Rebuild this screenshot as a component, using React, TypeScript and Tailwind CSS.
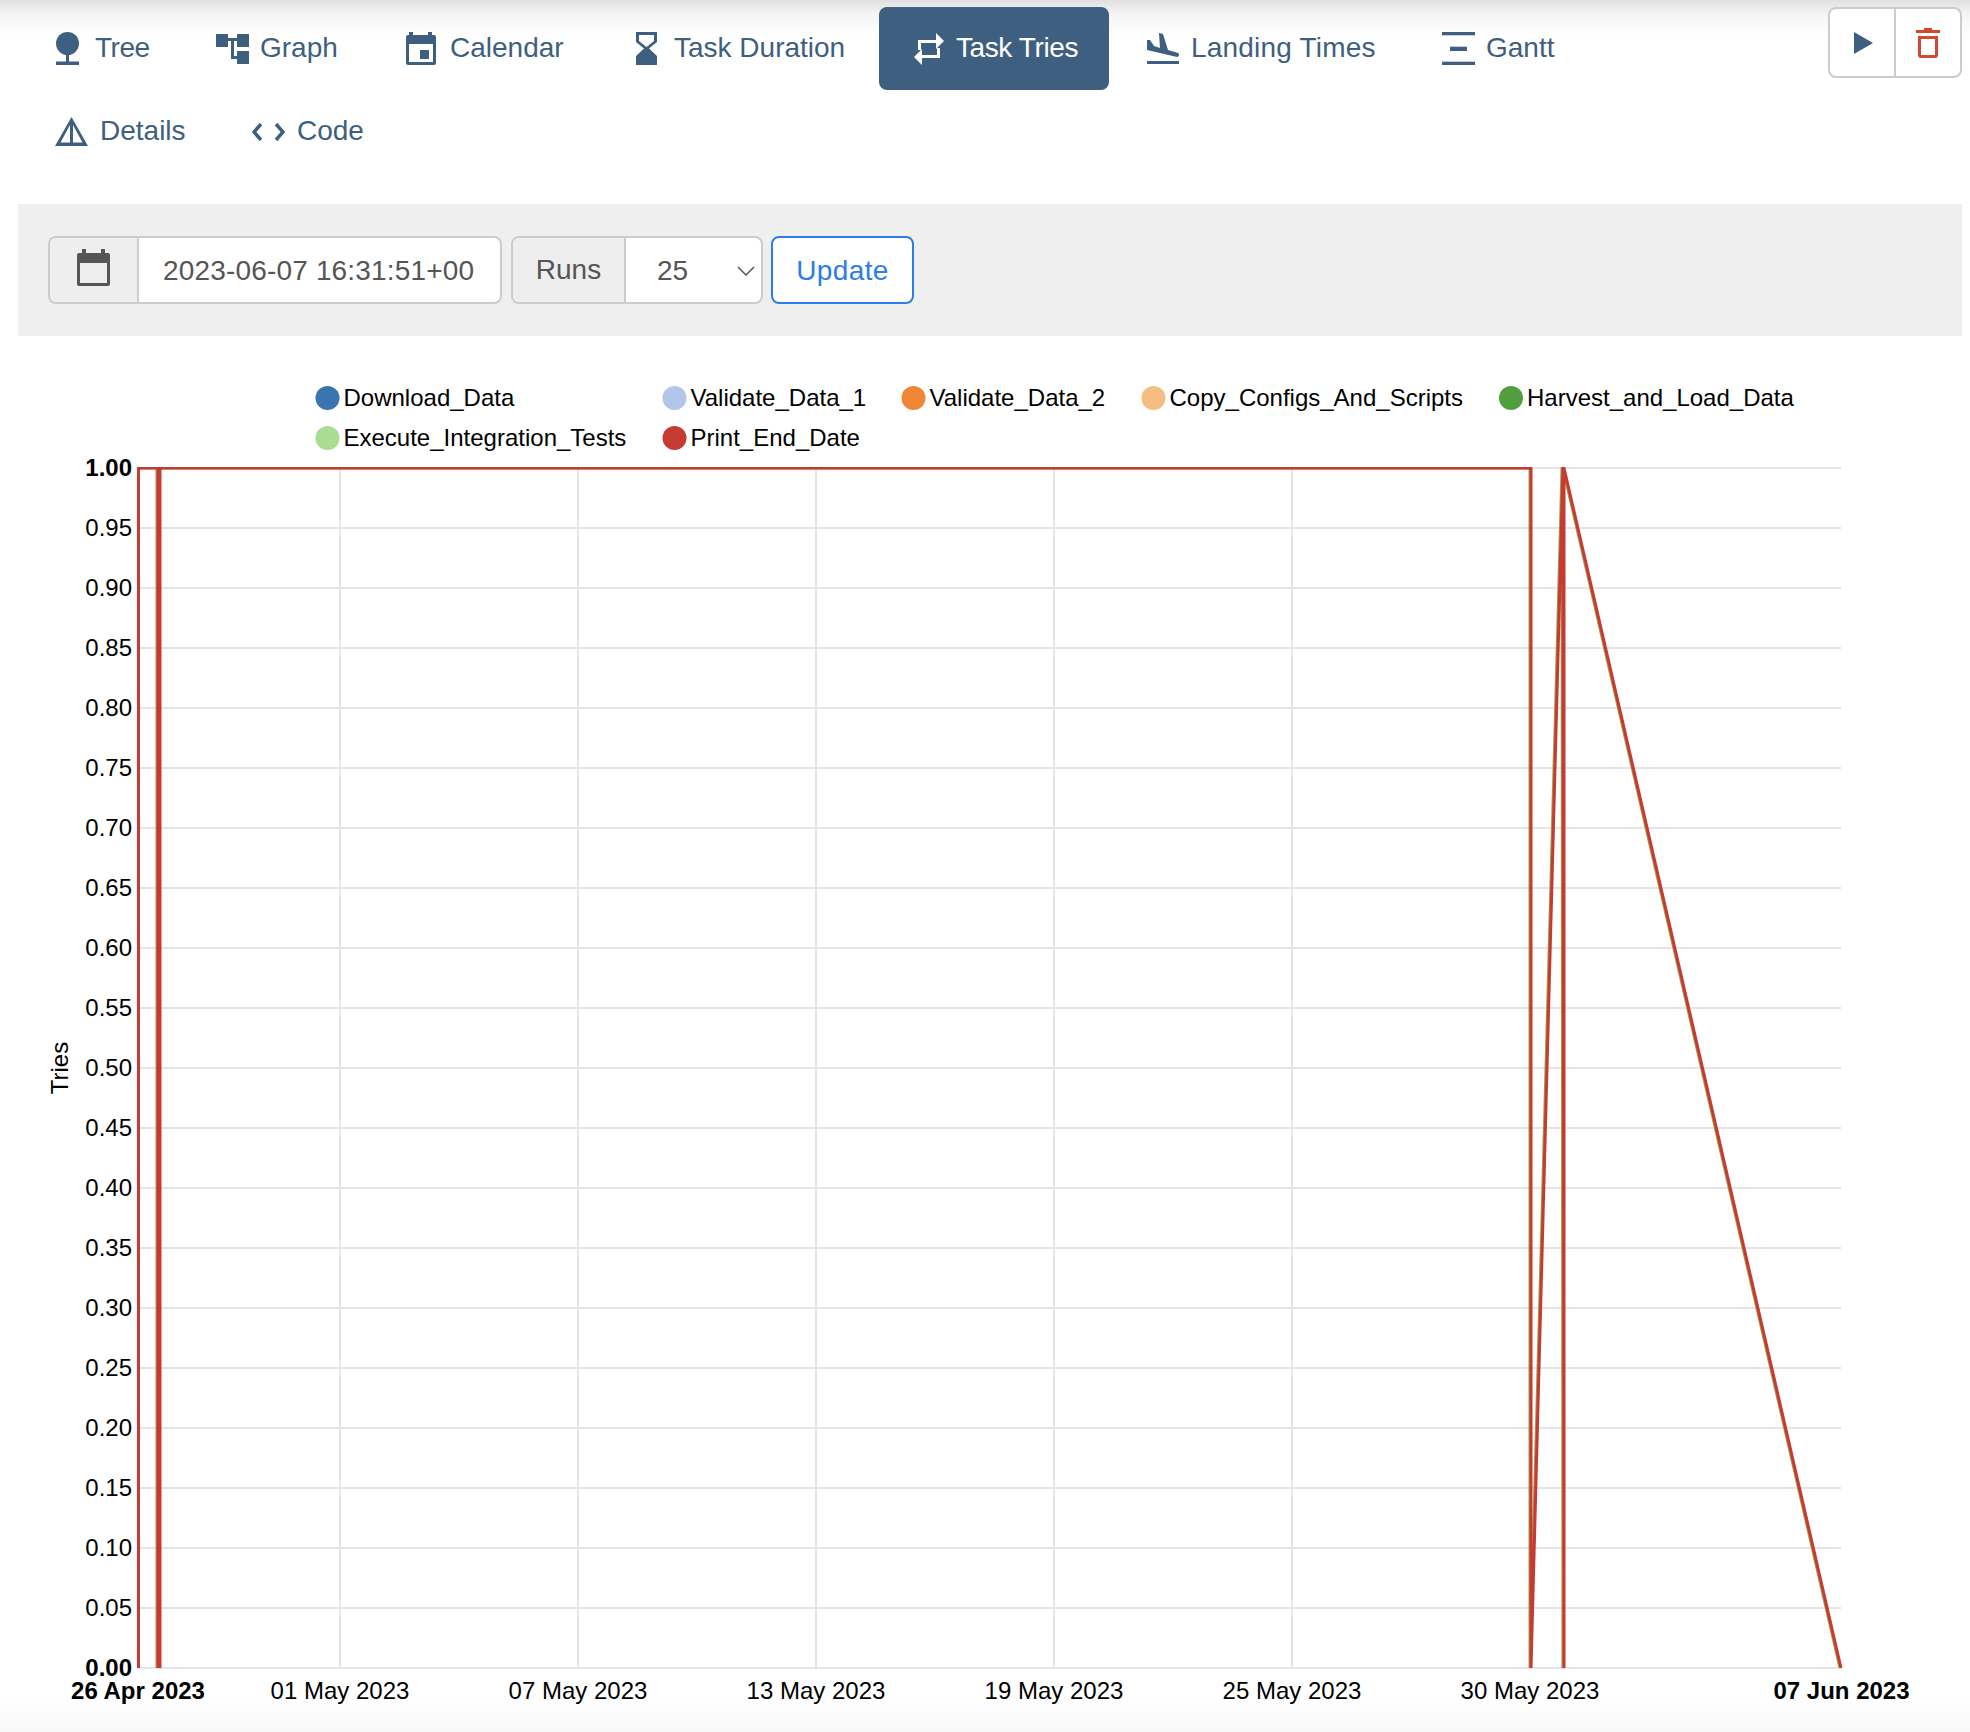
import React from "react";

const Tree = () => (
  <svg width="23" height="33" viewBox="0 0 23 33" fill="currentColor">
    <ellipse cx="11.5" cy="11.5" rx="11.5" ry="11.5" />
    <rect x="10" y="20" width="3" height="10" />
    <rect x="0" y="29.5" width="23" height="3.5" />
  </svg>
);

const GraphIcon = () => (
  <svg width="33" height="30" viewBox="0 0 33 30" fill="currentColor">
    <rect x="0" y="0" width="12" height="13" />
    <rect x="21" y="0" width="12" height="13" />
    <rect x="21" y="17" width="12" height="13" />
    <path d="M12 4h9v3h-3v15h3v3h-6V7h-3z" />
  </svg>
);

const CalendarIcon = () => (
  <svg width="30" height="33" viewBox="0 0 30 33" fill="currentColor">
    <path
      fillRule="evenodd"
      d="M3 0h4v3h15V0h4v3h2a2 2 0 0 1 2 2v26a2 2 0 0 1-2 2H2a2 2 0 0 1-2-2V5a2 2 0 0 1 2-2h1zM3 12v18h24V12z"
    />
    <rect x="14" y="18" width="9" height="9" />
  </svg>
);

const Hourglass = () => (
  <svg width="21" height="33" viewBox="0 0 21 33" fill="currentColor">
    <path
      fillRule="evenodd"
      d="M0 0h21v10l-8 6.5 8 7.5v9H0v-9l8-7.5L0 10zM3 3v6l7.5 6L18 9V3z"
    />
  </svg>
);

const Retweet = () => (
  <svg width="30" height="32" viewBox="0 0 30 32" fill="currentColor">
    <path d="M22 0l8 8-8 8v-6H7v7H4V7h18z" />
    <path d="M8 16v6h15v-7h3v10H8v7l-8-8z" />
  </svg>
);

const Landing = () => (
  <svg width="32" height="31" viewBox="0 0 32 31" fill="currentColor">
    <path d="M0 7h3l4 6 6 2-1-15 4 1 5 16 10 3c2 1 1 4-1 4L0 17z" />
    <rect x="0" y="28" width="32" height="3" />
  </svg>
);

const GanttIcon = () => (
  <svg width="33" height="33" viewBox="0 0 33 33" fill="currentColor">
    <rect x="0" y="0" width="33" height="3.3" />
    <rect x="8" y="14.7" width="17" height="4.3" />
    <rect x="0" y="29.7" width="33" height="3.3" />
  </svg>
);

const DetailsIcon = () => (
  <svg width="33" height="29" viewBox="0 0 33 29" fill="currentColor">
    <path
      fillRule="evenodd"
      d="M16.5 0L33 29H0zM15 8L5.5 25.5H15zM18 8v17.500h9.500z"
    />
  </svg>
);

const CodeIcon = () => (
  <svg width="33" height="18" viewBox="0 0 33 18" fill="none" stroke="currentColor" strokeWidth="3.5">
    <path d="M9 1L2 9l7 8" />
    <path d="M24 1l7 8-7 8" />
  </svg>
);

const tabs = [
  { name: "Tree", icon: <Tree />, width: "w-[157px]", box: "w-[44px] pl-[5px]", text: "tracking-[-0.5px]" },
  { name: "Graph", icon: <GraphIcon />, width: "w-[183px]", box: "w-[47px] pl-[3px]", text: "" },
  { name: "Calendar", icon: <CalendarIcon />, width: "w-[220px]", box: "w-[49px] pl-[5px]", text: "" },
  { name: "Task Duration", icon: <Hourglass />, width: "w-[278px]", box: "w-[48px] pl-[10px]", text: "" },
  { name: "Task Tries", icon: <Retweet />, width: "w-[230px]", box: "w-[47px] pl-[5px]", text: "tracking-[-0.4px]", active: true },
  { name: "Landing Times", icon: <Landing />, width: "w-[290px]", box: "w-[47px] pl-[3px]", text: "tracking-[0.2px]" },
  { name: "Gantt", icon: <GanttIcon />, width: "w-[176px]", box: "w-[47px] pl-[3px]", text: "" },
  { name: "Details", icon: <DetailsIcon />, width: "w-[194px]", box: "w-[49px] pl-[4px]", text: "" },
  { name: "Code", icon: <CodeIcon />, width: "w-[174px]", box: "w-[47px] pl-[2px]", text: "" },
];

const legend = [
  { name: "Download_Data", cx: 327.5, y: 398, color: "#3b75af" },
  { name: "Validate_Data_1", cx: 674.5, y: 398, color: "#b1c6e8" },
  { name: "Validate_Data_2", cx: 913.5, y: 398, color: "#ef8636" },
  { name: "Copy_Configs_And_Scripts", cx: 1153.5, y: 398, color: "#f5bd82" },
  { name: "Harvest_and_Load_Data", cx: 1511, y: 398, color: "#519e3e" },
  { name: "Execute_Integration_Tests", cx: 327.5, y: 438, color: "#a8dd93" },
  { name: "Print_End_Date", cx: 674.5, y: 438, color: "#c53a32" },
];

const xTicks = [
  { label: "26 Apr 2023", x: 138, bold: true },
  { label: "01 May 2023", x: 340 },
  { label: "07 May 2023", x: 578 },
  { label: "13 May 2023", x: 816 },
  { label: "19 May 2023", x: 1054 },
  { label: "25 May 2023", x: 1292 },
  { label: "30 May 2023", x: 1530 },
  { label: "07 Jun 2023", x: 1841.5, bold: true },
];

const yTicks = Array.from({ length: 21 }, (_, i) => i);

const triesLine =
  "M138.500 1668V468H158V1668H160V468H1531V1668L1563 468L1564 1668V468L1841 1668";

const Chart = () => (
  <svg width="1970" height="1396" viewBox="0 336 1970 1396" className="block text-[24px]">
    <defs>
      <clipPath id="plot">
        <rect x="137" y="467" width="1706" height="1201" />
      </clipPath>
    </defs>
    {yTicks.map((i) => (
      <line key={i} x1="138" x2="1841" y1={1668 - i * 60} y2={1668 - i * 60} stroke="#e5e5e5" strokeWidth="2" />
    ))}
    {xTicks.slice(1, 6).map((t) => (
      <line key={t.label} x1={t.x} x2={t.x} y1="468" y2="1668" stroke="#e5e5e5" strokeWidth="2" />
    ))}
    <g clipPath="url(#plot)">
      <path d={triesLine} transform="translate(-1 0)" fill="none" stroke="#a39c4a" strokeWidth="3" strokeLinejoin="round" />
      <path d={triesLine} fill="none" stroke="#c53a32" strokeWidth="3" strokeLinejoin="round" />
    </g>

    {yTicks.map((i) => (
      <text
        key={i}
        x="132"
        y={1668 - i * 60 + 8}
        textAnchor="end"
        fontWeight={i === 0 || i === 20 ? 700 : 400}
      >
        {(i * 0.05).toFixed(2)}
      </text>
    ))}
    {xTicks.map((t) => (
      <text key={t.label} x={t.x} y="1699" textAnchor="middle" fontWeight={t.bold ? 700 : 400}>
        {t.label}
      </text>
    ))}
    <text transform="translate(68 1068) rotate(-90)" textAnchor="middle">
      Tries
    </text>

    {legend.map((l) => (
      <g key={l.name}>
        <circle cx={l.cx} cy={l.y} r="12" fill={l.color} />
        <text x={l.cx + 16} y={l.y + 8}>
          {l.name}
        </text>
      </g>
    ))}
  </svg>
);

const App = () => {
  return (
    <div className="w-[1970px] h-[1732px] overflow-hidden bg-white flex flex-col text-[28px] [font-family:'Liberation_Sans',Arial,sans-serif]">
      <div className="flex justify-between items-start h-[204px] pt-[7px] pl-[21px] pr-[8px] bg-[linear-gradient(to_bottom,#e0e0e0_0,#f4f4f4_14px,#ffffff_36px)]">
        <ul className="flex flex-wrap gap-x-[5px] w-[1600px]">
          {tabs.map((tab) => (
            <li
              key={tab.name}
              className={`flex items-center h-[83px] pl-[30px] rounded-lg ${tab.width} ${
                tab.active ? "bg-[#3e5f80] text-white" : "text-[#3e5f80]"
              }`}
            >
              <span className={`flex items-center shrink-0 ${tab.box}`}>{tab.icon}</span>
              <span className={`whitespace-nowrap pb-[2px] ${tab.text}`}>{tab.name}</span>
            </li>
          ))}
        </ul>
        <div className="flex h-[71px] w-[134px] border-2 border-[#cccccc] rounded-lg bg-white">
          <button className="flex items-center justify-center w-[66px] pl-[3px] border-r-2 border-[#cccccc] text-[#3e5f80]">
            <svg width="19" height="22" viewBox="0 0 19 22" fill="currentColor">
              <path d="M0 0l19 11L0 22z" />
            </svg>
          </button>
          <button className="flex items-center justify-center flex-1 text-[#d04a33]">
            <svg width="24" height="30" viewBox="0 0 24 30" fill="currentColor">
              <path d="M8 0h8v2h8v3H0V2h8z" />
              <path
                fillRule="evenodd"
                d="M2 8h20v19a3 3 0 0 1-3 3H5a3 3 0 0 1-3-3zM5 11v16h14V11z"
              />
            </svg>
          </button>
        </div>
      </div>

      <div className="flex items-center gap-[9px] h-[132px] ml-[18px] mr-[8px] pl-[30px] bg-[#efefef] text-[#555555]">
        <div className="flex h-[68px] w-[454px] border-2 border-[#cccccc] rounded-lg bg-white overflow-hidden">
          <span className="flex items-center justify-center w-[89px] pb-[5px] border-r-2 border-[#cccccc] bg-[#eeeeee]">
            <svg width="33" height="37" viewBox="0 0 33 37" fill="#555555">
              <path
                fillRule="evenodd"
                d="M5 0h4v4h15V0h4v4h3a2 2 0 0 1 2 2v29a2 2 0 0 1-2 2H2a2 2 0 0 1-2-2V6a2 2 0 0 1 2-2h3zM3 14v20h27V14z"
              />
            </svg>
          </span>
          <span className="flex items-center pl-[24px] pt-[1px] tracking-[0.17px] whitespace-nowrap">2023-06-07 16:31:51+00</span>
        </div>
        <div className="flex h-[68px] w-[252px] border-2 border-[#cccccc] rounded-lg bg-white overflow-hidden">
          <span className="flex items-center justify-center w-[113px] border-r-2 border-[#cccccc] bg-[#eeeeee]">Runs</span>
          <span className="relative flex items-center flex-1 pl-[31px] pt-[2px]">
            25
            <svg
              className="absolute right-[6px] top-[28px]"
              width="18"
              height="10"
              viewBox="0 0 18 10"
              fill="none"
              stroke="#555555"
              strokeWidth="1.500"
            >
              <path d="M1 1l8 8 8-8" />
            </svg>
          </span>
        </div>
        <button className="flex items-center justify-center h-[68px] w-[143px] ml-[-1px] pt-[1px] border-2 border-[#2b7de9] rounded-lg bg-white text-[#2b7de9] tracking-[0.4px]">
          Update
        </button>
      </div>

      <div className="flex-1 bg-[linear-gradient(to_bottom,#ffffff_0,#ffffff_calc(100%-36px),#f8f8f8_100%)]">
        <Chart />
      </div>
    </div>
  );
};

export default App;
